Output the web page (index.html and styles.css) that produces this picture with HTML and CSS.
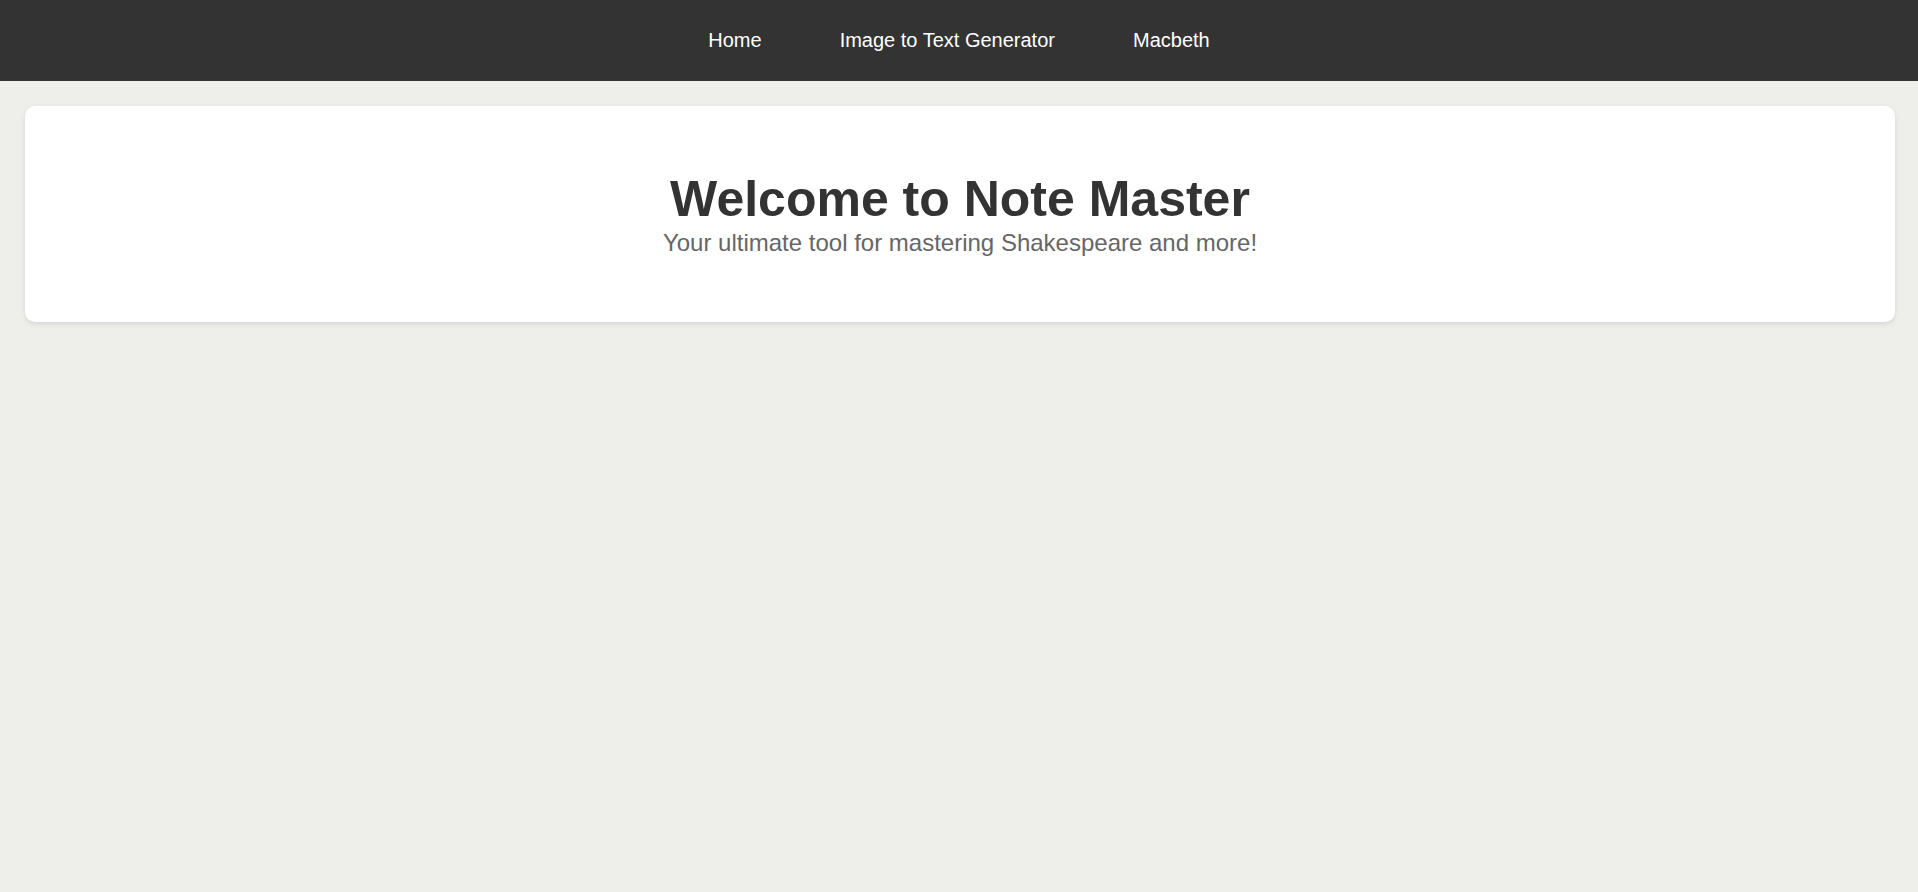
FILE: index.html
```html
<!DOCTYPE html>
<html lang="en">
<head>
<meta charset="utf-8">
<title>Note Master</title>
<link rel="stylesheet" href="styles.css">
</head>
<body>
<nav class="topnav">
  <a class="nav-link" href="#">Home</a>
  <a class="nav-link" href="#">Image to Text Generator</a>
  <a class="nav-link" href="#">Macbeth</a>
</nav>
<main class="content">
  <section class="hero">
    <h1 class="hero-title">Welcome to Note Master</h1>
    <p class="hero-sub">Your ultimate tool for mastering Shakespeare and more!</p>
  </section>
</main>
</body>
</html>
```
FILE: styles.css
```css
* { box-sizing: border-box; }
html, body { margin: 0; padding: 0; }
body {
  background: #eeeeea;
  font-family: "Liberation Sans", Arial, sans-serif;
  min-height: 892px;
}
.topnav {
  height: 81px;
  background: #333333;
  display: flex;
  justify-content: center;
  align-items: center;
  gap: 78px;
}
.nav-link {
  color: #ffffff;
  text-decoration: none;
  font-size: 20px;
}
.content {
  padding: 25px 23px 25px 25px;
}
.hero {
  background: #ffffff;
  border-radius: 10px;
  box-shadow: 0 2px 5px rgba(0,0,0,0.1);
  padding: 64px 20px 65px;
  text-align: center;
}
.hero-title {
  margin: 0 0 1px;
  font-size: 50px;
  font-weight: bold;
  color: #333333;
}
.hero-sub {
  margin: 0;
  font-size: 24px;
  color: #666666;
}
```
